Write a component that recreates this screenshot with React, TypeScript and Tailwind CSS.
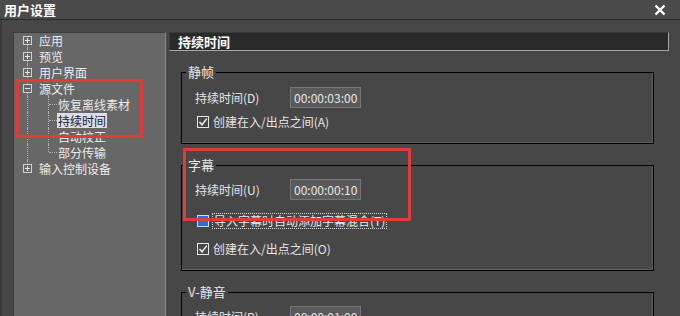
import React from 'react';

const FONT = { fontFamily: '"Noto Sans CJK SC", "Noto Sans", sans-serif' };

type Node = { label: string; kind: 'plus' | 'minus' | 'child'; first?: boolean; last?: boolean; childLast?: boolean; selected?: boolean };

const TREE: Node[] = [
  { label: '应用', kind: 'plus', first: true },
  { label: '预览', kind: 'plus' },
  { label: '用户界面', kind: 'plus' },
  { label: '源文件', kind: 'minus' },
  { label: '恢复离线素材', kind: 'child' },
  { label: '持续时间', kind: 'child', selected: true },
  { label: '自动校正', kind: 'child' },
  { label: '部分传输', kind: 'child', childLast: true },
  { label: '输入控制设备', kind: 'plus', last: true },
];

const Expander: React.FC<{ open?: boolean }> = ({ open }) => (
  <span className="relative z-10 flex h-[9px] w-[9px] items-center justify-center border border-[#d0d0d0] bg-[#676767]">
    <span className="absolute h-[1px] w-[5px] bg-[#e8e8e8]" />
    {!open && <span className="absolute h-[5px] w-[1px] bg-[#e8e8e8]" />}
  </span>
);

const TreeRow: React.FC<{ node: Node }> = ({ node }) => {
  const isChild = node.kind === 'child';
  return (
    <div className="relative flex h-[16px] items-center">
      {/* top-level connector */}
      <span
        className={`absolute left-[13px] w-0 border-l border-dotted border-[#b0b0b0] ${node.first ? 'top-[8px]' : 'top-0'} ${node.last ? 'h-[8px]' : 'bottom-0'}`}
      />
      {isChild && (
        <>
          <span className={`absolute left-[34px] top-0 w-0 border-l border-dotted border-[#b0b0b0] ${node.childLast ? 'h-[8px]' : 'bottom-0'}`} />
          <span className="absolute left-[35px] top-[8px] h-0 w-[8px] border-t border-dotted border-[#b0b0b0]" />
        </>
      )}
      {node.kind === 'minus' && (
        <span className="absolute left-[34px] top-[12px] bottom-0 w-0 border-l border-dotted border-[#b0b0b0]" />
      )}
      {isChild ? (
        <span
          className={`ml-[43px] px-[1px] text-[12px] leading-[15px] ${node.selected ? 'bg-[#dcdcec] text-[#1c1c1c]' : 'text-[#ececec]'}`}
        >
          {node.label}
        </span>
      ) : (
        <>
          <span className="ml-[9px]">
            <Expander open={node.kind === 'minus'} />
          </span>
          <span className="ml-[7px] text-[12px] leading-[15px] text-[#ececec]">{node.label}</span>
        </>
      )}
    </div>
  );
};

const Check: React.FC = () => (
  <svg width="12" height="12" viewBox="0 0 12 12" className="shrink-0">
    <rect x="0.5" y="0.5" width="11" height="11" fill="none" stroke="#e6e6e6" />
    <path d="M2.5 6 L5 8.8 L9.8 2.6" fill="none" stroke="#f0f0f0" strokeWidth="1.5" />
  </svg>
);

const Field: React.FC<{ label: string; value: string }> = ({ label, value }) => (
  <div className="flex h-[21px] items-center">
    <span className="w-[95px] text-[12px] text-[#e6e6e6]">{label}</span>
    <span className="flex h-[21px] w-[71px] items-center border border-[#777] bg-[#5a5a5a] pl-[3px] text-[12px] text-[#e8e8e8]">
      {value}
    </span>
  </div>
);

const CheckRow: React.FC<{ label: string }> = ({ label }) => (
  <div className="flex h-[16px] items-center pl-[2px]">
    <Check />
    <span className="ml-[4px] text-[12px] text-[#e6e6e6]">{label}</span>
  </div>
);

const Group: React.FC<{ title: string; children: React.ReactNode }> = ({ title, children }) => (
  <fieldset className="mt-[13px] ml-[12px] w-[473px] border border-black px-0 shadow-[inset_-1px_-1px_0_#5e5e5e]">
    <legend className="ml-[4px] px-[2px] text-[13px] leading-[16px] text-[#e8e8e8]">{title}</legend>
    {children}
  </fieldset>
);

export default function App() {
  return (
    <div className="flex h-[316px] w-[680px] flex-col overflow-hidden bg-[#474747]" style={FONT}>
      {/* title bar */}
      <div className="flex h-[20px] shrink-0 items-center justify-between border-b border-[#2a2a2a] bg-[#4b4b4b] pl-[4px] pr-[14px]">
        <span className="text-[13px] font-bold leading-none text-white">用户设置</span>
        <svg width="12" height="12" viewBox="0 0 12 12">
          <path d="M1.5 1.5 L10.5 10.5 M10.5 1.5 L1.5 10.5" stroke="#fff" strokeWidth="2.4" />
        </svg>
      </div>

      <div className="flex min-h-0 flex-1 border-l-[2px] border-[#393939] pl-[11px] pt-[12px]">
        {/* tree panel */}
        <div className="relative w-[153px] shrink-0 border-l border-t border-[#3c3c3c] border-r border-r-[#8a8a8a] bg-[#676767]">
          <div className="-mt-[1px]">
            {TREE.map((n) => (
              <TreeRow key={n.label} node={n} />
            ))}
          </div>
          <div className="pointer-events-none absolute left-[2px] top-[46px] h-[59px] w-[127px] border-[3px] border-[#e23b3b]" />
        </div>

        {/* settings pane */}
        <div className="relative ml-[3px] flex w-[500px] shrink-0 flex-col">
          <div className="flex h-[19px] shrink-0 items-center border border-t-[#3a3a3a] border-l-[#3a3a3a] border-b-[#a6a6a6] border-r-[#a6a6a6] bg-[#2a2a2a] pl-[8px]">
            <span className="text-[13px] font-bold leading-none text-white">持续时间</span>
          </div>

          <Group title="静帧">
            <div className="flex flex-col gap-[6px] pb-[13px] pl-[13px] pt-[7px]">
              <Field label="持续时间(D)" value="00:00:03:00" />
              <CheckRow label="创建在入/出点之间(A)" />
            </div>
          </Group>

          <Group title="字幕">
            <div className="flex flex-col pb-[13px] pl-[13px] pt-[6px]">
              <Field label="持续时间(U)" value="00:00:00:10" />
              <div className="mt-[13px] flex h-[16px] items-center pl-[2px]">
                <span className="h-[12px] w-[12px] shrink-0 border border-[#cfd8e8] bg-[#2a6ed8]" />
                <span className="ml-[3px] border border-dotted border-[#d8d8d8] px-[1px] text-[12px] leading-[14px] text-[#e6e6e6]">
                  导入字幕时自动添加字幕混合(T)
                </span>
              </div>
              <div className="mt-[12px]">
                <CheckRow label="创建在入/出点之间(O)" />
              </div>
            </div>
          </Group>

          <Group title="V-静音">
            <div className="flex flex-col pb-[11px] pl-[13px] pt-[6px]">
              <Field label="持续时间(P)" value="00:00:01:00" />
            </div>
          </Group>

          <div className="pointer-events-none absolute left-[14px] top-[116px] h-[73px] w-[228px] border-[3px] border-[#e23b3b]" />
        </div>
      </div>
    </div>
  );
}
